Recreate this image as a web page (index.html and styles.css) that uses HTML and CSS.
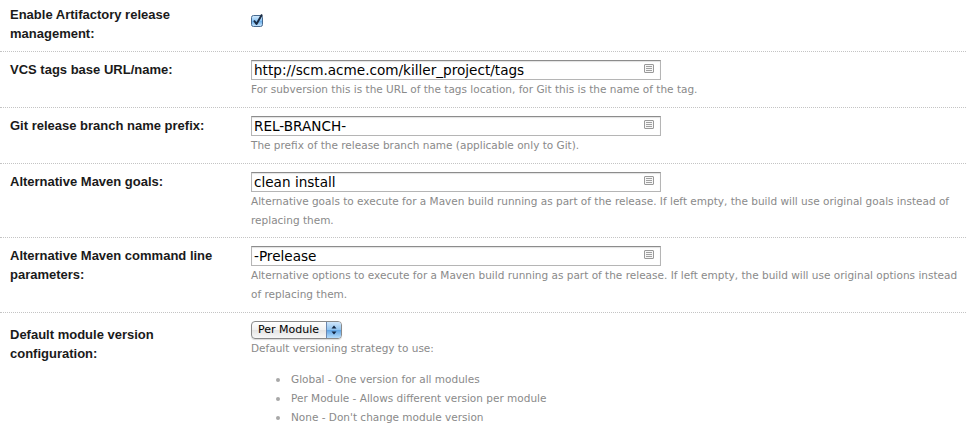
FILE: index.html
```html
<!DOCTYPE html>
<html>
<head>
<meta charset="utf-8">
<link rel="stylesheet" href="styles.css">
</head>
<body>
<div class="form">
  <div class="row row--first">
    <div class="label">Enable Artifactory release management:</div>
    <div class="value">
      <span class="checkbox">
        <svg width="14" height="15" viewBox="0 0 14 15">
          <defs>
            <linearGradient id="cbg" x1="0" y1="0" x2="0" y2="1">
              <stop offset="0" stop-color="#d9eeff"/>
              <stop offset="0.45" stop-color="#93c8f4"/>
              <stop offset="0.55" stop-color="#6fb0ea"/>
              <stop offset="1" stop-color="#cde9ff"/>
            </linearGradient>
          </defs>
          <rect x="0.5" y="2.5" width="11" height="11" rx="2" fill="url(#cbg)" stroke="#47698f"/>
          <path d="M3 7.5 L5.5 11 L11 1.5" stroke="#1b2c44" stroke-width="2" fill="none" stroke-linejoin="round"/>
        </svg>
      </span>
    </div>
  </div>
  <div class="row">
    <div class="label">VCS tags base URL/name:</div>
    <div class="value">
      <div class="field"><span class="field__text">http://scm.acme.com/killer_project/tags</span><span class="field__icon"></span></div>
      <div class="help">For subversion this is the URL of the tags location, for Git this is the name of the tag.</div>
    </div>
  </div>
  <div class="row">
    <div class="label">Git release branch name prefix:</div>
    <div class="value">
      <div class="field"><span class="field__text">REL-BRANCH-</span><span class="field__icon"></span></div>
      <div class="help">The prefix of the release branch name (applicable only to Git).</div>
    </div>
  </div>
  <div class="row row--tall">
    <div class="label">Alternative Maven goals:</div>
    <div class="value">
      <div class="field"><span class="field__text">clean install</span><span class="field__icon"></span></div>
      <div class="help">Alternative goals to execute for a Maven build running as part of the release. If left empty, the build will use original goals instead of replacing them.</div>
    </div>
  </div>
  <div class="row">
    <div class="label">Alternative Maven command line parameters:</div>
    <div class="value">
      <div class="field"><span class="field__text">-Prelease</span><span class="field__icon"></span></div>
      <div class="help">Alternative options to execute for a Maven build running as part of the release. If left empty, the build will use original options instead of replacing them.</div>
    </div>
  </div>
  <div class="row row--last">
    <div class="label label--low">Default module version configuration:</div>
    <div class="value">
      <div class="select">
        <span class="select__text">Per Module</span>
        <span class="select__arrows">
          <svg width="8" height="12" viewBox="0 0 8 12">
            <path d="M4 1.5 L6.5 4.5 L1.5 4.5 Z" fill="#10233f"/>
            <path d="M4 10.5 L6.5 7.5 L1.5 7.5 Z" fill="#10233f"/>
          </svg>
        </span>
      </div>
      <div class="help">Default versioning strategy to use:</div>
      <ul class="help-list">
        <li>Global - One version for all modules</li>
        <li>Per Module - Allows different version per module</li>
        <li>None - Don't change module version</li>
      </ul>
    </div>
  </div>
</div>
</body>
</html>
```

FILE: styles.css
```css
html, body {
  margin: 0;
  padding: 0;
  background: #ffffff;
}

body {
  font-family: "Liberation Sans", Arial, sans-serif;
  color: #222;
}

.form {
  width: 966px;
}

.row {
  display: grid;
  grid-template-columns: 241px 1fr;
  padding: 8px 6px 8px 10px;
  border-bottom: 1px dotted #c4c4c4;
}

.row--first {
  padding-top: 5px;
  padding-bottom: 8px;
}

.row--tall {
  padding-bottom: 7px;
}

.row--last {
  border-bottom: none;
}

.label {
  font-size: 13px;
  font-weight: bold;
  line-height: 19px;
  color: #1a1a1a;
  width: 226px;
}

.label--low {
  padding-top: 4px;
}

.value {
  min-width: 0;
}

.checkbox {
  display: block;
  padding-top: 8px;
  height: 15px;
}

.checkbox svg {
  display: block;
}

.field {
  position: relative;
  box-sizing: border-box;
  width: 410px;
  height: 20px;
  border: 1px solid #b5b5b5;
  border-top-color: #8c8c8c;
  box-shadow: inset 0 1px 1px rgba(0,0,0,0.12);
  background: #fff;
  padding: 0 2px;
  font-family: "DejaVu Sans", sans-serif;
  font-size: 13.6px;
  line-height: 18px;
  color: #000;
  white-space: nowrap;
}

.field__icon {
  position: absolute;
  right: 6px;
  top: 3px;
  width: 8px;
  height: 7px;
  border: 1px solid #999;
  border-radius: 1px;
  background:
    linear-gradient(#a0a0a0, #a0a0a0) 1px 1px / 6px 1px no-repeat,
    linear-gradient(#a0a0a0, #a0a0a0) 1px 3px / 6px 1px no-repeat,
    linear-gradient(#a0a0a0, #a0a0a0) 1px 5px / 6px 1px no-repeat,
    #f6f6f6;
}

.help {
  font-family: "DejaVu Sans", sans-serif;
  font-size: 10.5px;
  line-height: 19px;
  color: #8a8a8a;
}

.select {
  display: inline-flex;
  box-sizing: border-box;
  height: 18px;
  border: 1px solid #8a8a8a;
  border-radius: 4px;
  overflow: hidden;
  background: linear-gradient(#ffffff, #f1f1f1 50%, #e4e4e4 51%, #f7f7f7);
  box-shadow: 0 1px 1px rgba(0,0,0,0.15);
  vertical-align: top;
}

.select__text {
  padding: 0 7px 0 6px;
  font-family: "DejaVu Sans", sans-serif;
  font-size: 11px;
  line-height: 16px;
  color: #000;
}

.select__arrows {
  display: flex;
  align-items: center;
  justify-content: center;
  width: 14px;
  border-left: 1px solid #6b87b0;
  background: linear-gradient(#cfe6fb, #8fc2ee 50%, #5fa3e3 51%, #b5dcfb);
}

.help-list {
  margin: 12px 0 0 0;
  padding: 0 0 0 40px;
  list-style: none;
  font-family: "DejaVu Sans", sans-serif;
  font-size: 10.5px;
  line-height: 19px;
  color: #8a8a8a;
}

.help-list li {
  position: relative;
}

.help-list li::before {
  content: "";
  position: absolute;
  left: -15px;
  top: 8px;
  width: 4px;
  height: 4px;
  border-radius: 50%;
  background: #a8a8a8;
}
```
